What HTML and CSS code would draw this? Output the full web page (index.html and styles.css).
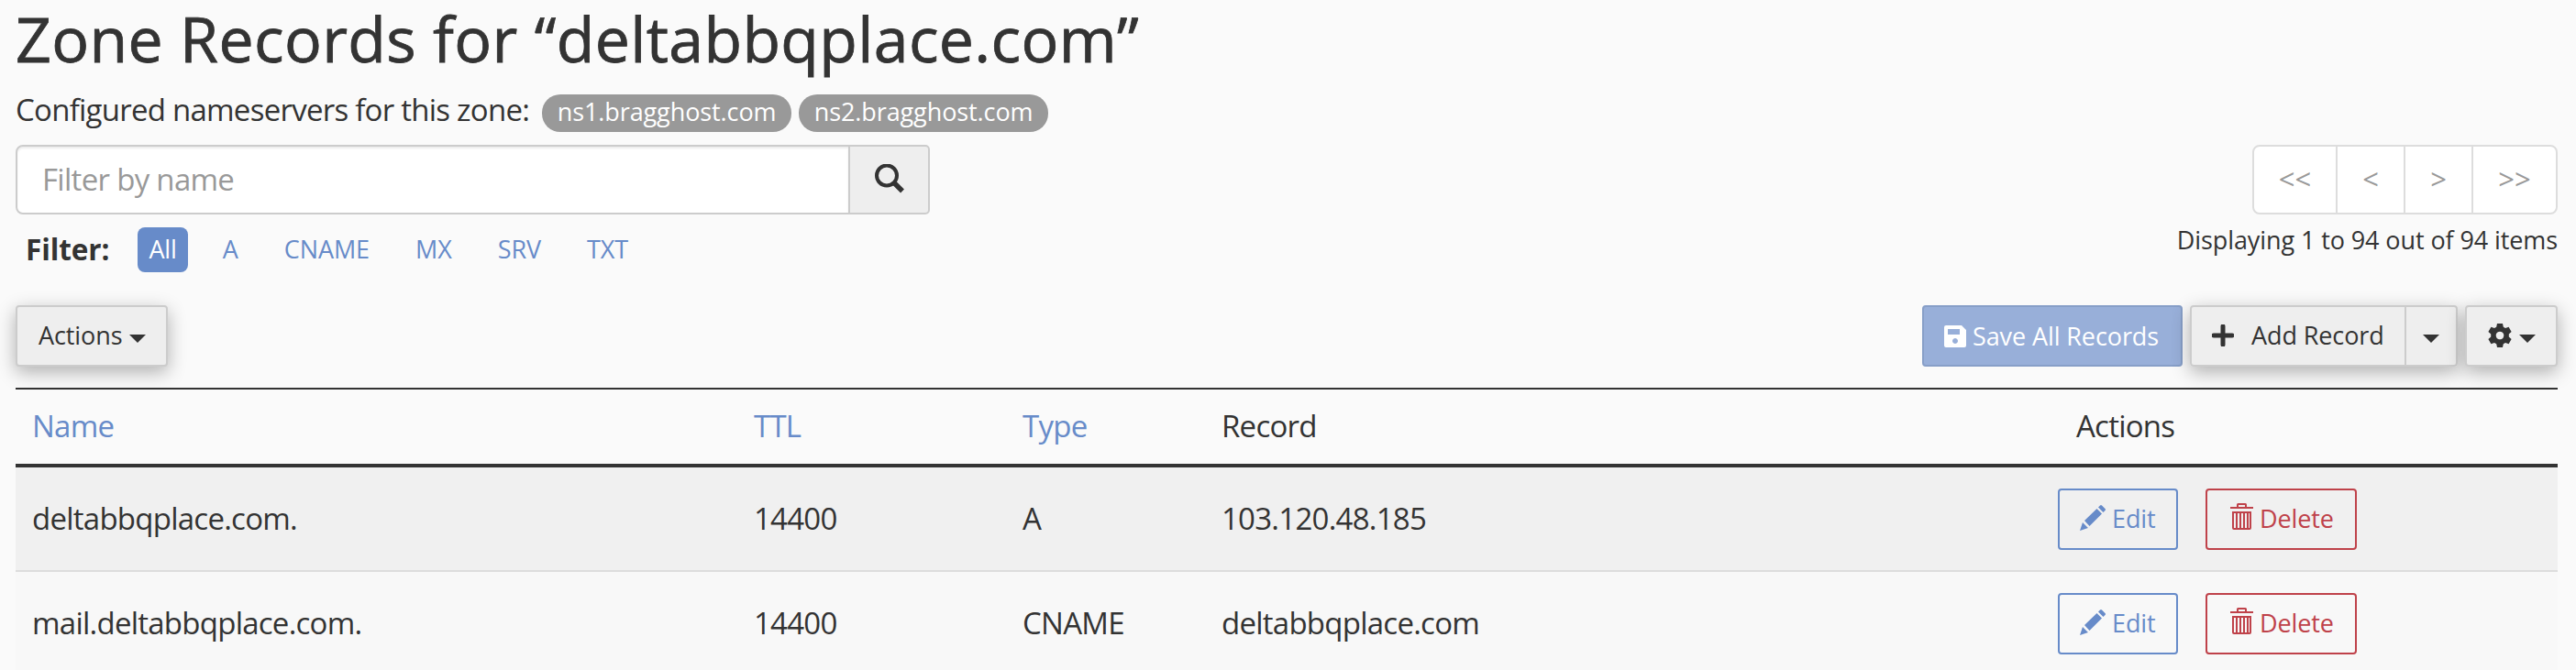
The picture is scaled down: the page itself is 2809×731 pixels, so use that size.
FILE: index.html
```
<!DOCTYPE html>
<html lang="en">
<head>
    <meta charset="UTF-8">
    <title>Zone Records</title>
    <link rel="stylesheet" href="styles.css">
</head>
<body>
    <svg class="sprite" width="0" height="0">
        <symbol id="icon-pencil" viewBox="0 0 28 28">
            <path d="M0 28l3-9 6 6zM5 17L18.500 4l5.500 5.500L10.500 23zM20 2.500l2-2q1-1 2 0l3.500 3.500q1 1 0 2l-2 2z"/>
        </symbol>
        <symbol id="icon-trash" viewBox="0 0 25 29">
            <path d="M0 4h7V1.500Q7 0 8.500 0h8Q18 0 18 1.500V4h7v2H0zM9 2v2h7V2z" fill-rule="evenodd"/>
            <path d="M2 9h21v18q0 2-2 2H4q-2 0-2-2zM4 11v16h2V11zM8 11v16h2V11zM12 11v16h2V11zM16 11v16h2V11zM20 11v16h1V11z" fill-rule="evenodd"/>
        </symbol>
    </svg>
    <div class="zone">
        <h1>Zone Records for “deltabbqplace.com”</h1>
        <div class="nameservers">
            <span>Configured nameservers for this zone:</span>
            <span class="badge">ns1.bragghost.com</span>
            <span class="badge">ns2.bragghost.com</span>
        </div>
        <div class="top">
            <div class="search">
                <div class="input-group">
                    <input type="text" placeholder="Filter by name">
                    <button class="search-btn">
                        <svg width="32" height="32" viewBox="0 0 32 32"><circle cx="13" cy="12.500" r="11" fill="none" stroke="#333" stroke-width="4"/><path d="M20.500 20l9.500 9.500" stroke="#333" stroke-width="5.500"/></svg>
                    </button>
                </div>
                <div class="filter">
                    <strong>Filter:</strong>
                    <a class="active">All</a>
                    <a>A</a>
                    <a>CNAME</a>
                    <a>MX</a>
                    <a>SRV</a>
                    <a>TXT</a>
                </div>
            </div>
            <div class="paging">
                <div class="pagination">
                    <a>&lt;&lt;</a>
                    <a>&lt;</a>
                    <a>&gt;</a>
                    <a>&gt;&gt;</a>
                </div>
                <div class="page-stats">Displaying 1 to 94 out of 94 items</div>
            </div>
        </div>
        <div class="toolbar">
            <button class="btn btn-menu">Actions<i class="caret"></i></button>
            <div class="toolbar-right">
                <button class="btn btn-save">
                    <svg width="24" height="24" viewBox="0 0 24 24" fill="#fff"><path fill-rule="evenodd" d="M2 0h17l5 5v17q0 2-2 2H2q-2 0-2-2V2Q0 0 2 0zM4 4v6h13V4zM12 14a3 3 0 1 0 .01 0z"/></svg>
                    <span>Save All Records</span>
                </button>
                <div class="btn-group">
                    <button class="btn btn-add">
                        <svg width="24" height="24" viewBox="0 0 24 24"><path d="M12 2v20M2 12h20" stroke="#333" stroke-width="5" stroke-linecap="round"/></svg>
                        <span>Add Record</span>
                    </button>
                    <button class="btn btn-toggle"><i class="caret"></i></button>
                </div>
                <button class="btn btn-gear">
                    <svg width="26" height="26" viewBox="0 0 26 26" fill="#333"><path fill-rule="evenodd" d="M10 0h6l.8 3.700 2.200 1.300 3.600-1.200 3 5.200-2.800 2.500v3l2.800 2.500-3 5.200-3.600-1.200-2.200 1.300L16 26h-6l-.8-3.700L7 21l-3.600 1.200-3-5.200 2.800-2.500v-3L.4 9l3-5.200L7 5l2.200-1.300zM13 8.700a4.300 4.300 0 1 0 .01 0z"/></svg>
                    <i class="caret"></i>
                </button>
            </div>
        </div>
        <table class="records">
            <thead>
                <tr>
                    <th class="col-name"><a>Name</a></th>
                    <th class="col-ttl"><a>TTL</a></th>
                    <th class="col-type"><a>Type</a></th>
                    <th class="col-record">Record</th>
                    <th class="col-actions">Actions</th>
                </tr>
            </thead>
            <tbody>
                <tr>
                    <td>deltabbqplace.com.</td>
                    <td>14400</td>
                    <td>A</td>
                    <td>103.120.48.185</td>
                    <td>
                        <div class="row-actions">
                            <button class="btn btn-edit"><svg width="28" height="28"><use href="#icon-pencil"/></svg>Edit</button>
                            <button class="btn btn-delete"><svg width="25" height="29"><use href="#icon-trash"/></svg>Delete</button>
                        </div>
                    </td>
                </tr>
                <tr>
                    <td>mail.deltabbqplace.com.</td>
                    <td>14400</td>
                    <td>CNAME</td>
                    <td>deltabbqplace.com</td>
                    <td>
                        <div class="row-actions">
                            <button class="btn btn-edit"><svg width="28" height="28"><use href="#icon-pencil"/></svg>Edit</button>
                            <button class="btn btn-delete"><svg width="25" height="29"><use href="#icon-trash"/></svg>Delete</button>
                        </div>
                    </td>
                </tr>
            </tbody>
        </table>
    </div>
</body>
</html>
```
FILE: styles.css
```
* {
    box-sizing: border-box;
}
body {
    margin: 0;
    height: 731px;
    overflow: hidden;
    background-color: #fafafa;
    color: #333;
    font: 33px "Open Sans", sans-serif;
    letter-spacing: -.75px;
}
button, input {
    font-family: inherit;
    color: inherit;
    margin: 0;
}
svg {
    flex-shrink: 0;
}
.sprite {
    position: absolute;
}
.zone {
    width: 2772px;
    margin-left: 17px;
}
h1 {
    margin: 0 0 13px;
    font-size: 68px;
    font-weight: 400;
    line-height: 84px;
    letter-spacing: .35px;
    -webkit-text-stroke: .8px #333;
}
.nameservers {
    display: flex;
    align-items: baseline;
    height: 61px;
    line-height: 46px;
}
.badge {
    width: 272px;
    margin-left: 14px;
    padding-bottom: 3px;
    border-radius: 20px;
    background-color: #999;
    color: #fff;
    font-size: 27px;
    line-height: 38px;
    letter-spacing: -.1px;
    text-align: center;
}
.badge + .badge {
    margin-left: 8px;
}
.top {
    display: flex;
    justify-content: space-between;
    height: 175px;
}
.input-group {
    display: flex;
    width: 997px;
    height: 76px;
}
.input-group input {
    width: 910px;
    padding: 0 27px 1px;
    border: 2px solid #ccc;
    border-radius: 8px 0 0 8px;
    background-color: #fff;
    box-shadow: inset 0 2px 2px rgba(0, 0, 0, .075);
    font-size: 33px;
    letter-spacing: -.7px;
}
.input-group input::placeholder {
    color: #999;
}
.search-btn {
    display: flex;
    flex: 1;
    align-items: center;
    justify-content: center;
    margin-left: -2px;
    padding: 0 0 3px 1px;
    border: 2px solid #ccc;
    border-radius: 0 5px 5px 0;
    background-color: #eee;
}
.filter {
    display: flex;
    align-items: center;
    margin: 14px 0 0 11px;
    height: 49px;
    font-size: 27px;
    line-height: 47px;
    letter-spacing: -.1px;
}
.filter strong {
    margin-right: 19px;
    padding-bottom: 2px;
    font-size: 31.5px;
}
.filter a {
    padding: 0 12px 2px;
    margin-left: 12px;
    margin-right: 14px;
    border-radius: 8px;
    color: #678bc9;
}
.filter a.active {
    background-color: #678bc9;
    color: #fff;
}
.pagination {
    display: flex;
    width: 333px;
    height: 76px;
    margin-left: auto;
    border: 2px solid #ddd;
    border-radius: 8px;
    background-color: #fff;
    color: #999;
    font-size: 31px;
    line-height: 70px;
    letter-spacing: 0;
    text-align: center;
}
.pagination a {
    flex: 0 0 74px;
    border-right: 2px solid #ddd;
}
.pagination a:first-child {
    flex-basis: 91px;
}
.pagination a:last-child {
    flex: 1;
    border-right: 0;
}
.page-stats {
    margin-top: 9px;
    font-size: 27px;
    line-height: 38px;
    letter-spacing: -.1px;
    text-align: right;
}
.toolbar {
    display: flex;
    justify-content: space-between;
    height: 90px;
}
.toolbar-right {
    display: flex;
    gap: 8px;
}
.btn {
    display: flex;
    align-items: center;
    height: 67px;
    padding: 0 22px 1px;
    border: 2px solid #ccc;
    border-radius: 4px;
    background-color: #eee;
    font-size: 27px;
    line-height: 40px;
    letter-spacing: -.1px;
    white-space: nowrap;
}
.caret {
    margin: 7px 0 0 8px;
    border: 9px solid transparent;
    border-top-color: #333;
    border-bottom: 0;
}
.btn-menu, .btn-group, .btn-gear {
    box-shadow: 0 6px 20px rgba(0, 0, 0, .3);
}
.btn-menu {
    width: 166px;
    padding-left: 23px;
}
.btn-save {
    width: 284px;
    border-color: #879fc8;
    background-color: #98afd9;
    color: #fff;
    padding-bottom: 0;
}
.btn-save span {
    margin-left: 7px;
}
.btn-group {
    display: flex;
    height: 67px;
    border-radius: 4px;
}
.btn-add {
    width: 236px;
    border-radius: 4px 0 0 4px;
}
.btn-add svg {
    margin-bottom: 1px;
}
.btn-add span {
    margin-left: 19px;
}
.btn-toggle {
    width: 58px;
    margin-left: -2px;
    padding-left: 18px;
    border-radius: 0 4px 4px 0;
}
.btn-toggle .caret {
    margin-left: 0;
}
.btn-gear {
    width: 101px;
    padding: 0 20px 1px 23px;
}
.records {
    width: 100%;
    table-layout: fixed;
    border-collapse: separate;
    border-spacing: 0;
    border-top: 2px solid #333;
}
.records th, .records td {
    padding: 0 0 0 18px;
    text-align: left;
    font-weight: 400;
}
.records th {
    height: 85px;
    padding-bottom: 3px;
    border-bottom: 4px solid #333;
}
.records th a {
    color: #678bc9;
}
.records td {
    height: 114px;
    padding-bottom: 2px;
    border-bottom: 2px solid #ddd;
    background-color: #f8f8f8;
}
.records td:last-child {
    padding-bottom: 0;
}
.records tr:first-child td {
    background-color: #f0f0f0;
}
.col-name {
    width: 787px;
}
.col-ttl {
    width: 293px;
}
.col-type {
    width: 217px;
}
.col-record {
    width: 912px;
}
.records .col-actions {
    padding-left: 38px;
}
.row-actions {
    display: flex;
    gap: 30px;
}
.btn-edit {
    width: 131px;
    border-color: #678bc9;
    background: none;
    color: #678bc9;
    fill: #678bc9;
}
.btn-edit svg {
    margin: 0 7px 2px 0;
}
.btn-delete {
    width: 165px;
    padding-left: 25px;
    border-color: #bf424a;
    background: none;
    color: #bf424a;
    fill: #bf424a;
}
.btn-delete svg {
    margin: 0 7px 5px 0;
}
```
